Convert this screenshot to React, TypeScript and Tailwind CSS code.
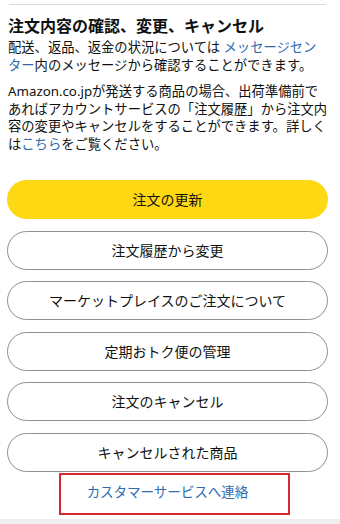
const buttons = [
  '注文履歴から変更',
  'マーケットプレイスのご注文について',
  '定期おトク便の管理',
  '注文のキャンセル',
  'キャンセルされた商品',
];

export default function App() {
  return (
    <div className="min-h-[524px] bg-white font-['Noto_Sans','Noto_Sans_CJK_JP',sans-serif] text-[#0f1111]">
      {/* Header + description */}
      <div className="pl-[8px] pt-[4px] w-[326px]">
        <div className="ml-[1px] h-px bg-[#dcdcdc]" />
        <h2 className="mt-[10px] text-[16px] leading-[22px] font-bold whitespace-nowrap">
          注文内容の確認、変更、キャンセル
        </h2>
        <p className="mt-[2px] text-[13.3px] leading-[17.7px] whitespace-nowrap">
          配送、返品、返金の状況については <a className="text-[#2e6bb0]">メッセージセン</a>
          <br />
          <a className="text-[#2e6bb0]">ター</a>内のメッセージから確認することができます。
        </p>
        <p className="mt-[8.6px] text-[13.3px] leading-[17.7px] whitespace-nowrap">
          Amazon.co.jpが発送する商品の場合、出荷準備前で
          <br />
          あればアカウントサービスの「注文履歴」から注文内
          <br />
          容の変更やキャンセルをすることができます。詳しく
          <br />
          は<a className="text-[#2e6bb0]">こちら</a>をご覧ください。
        </p>
      </div>

      {/* Actions */}
      <div className="mt-[26.2px] pl-[7px] w-[328px] flex flex-col gap-[11.6px]">
        <button className="h-[39px] w-full rounded-full bg-[#ffd814] text-[14px] text-[#0f1111]">
          注文の更新
        </button>
        {buttons.map((label) => (
          <button
            key={label}
            className="h-[39px] w-full rounded-full border border-[#8d9096] bg-white text-[14px] text-[#0f1111]"
          >
            {label}
          </button>
        ))}
      </div>

      {/* Contact link, highlighted */}
      <div className="relative mt-[1px] ml-[7px] w-[321px] h-[42px] flex items-center justify-center pb-[4px]">
        <a className="text-[13.5px] text-[#2e6bb0]">カスタマーサービスへ連絡</a>
        <div className="absolute left-[52px] top-0 w-[231px] h-[42px] border-2 border-[#d42a35]" />
      </div>

      <div className="mt-[4px] h-[20px] bg-[#eeeeee]" />
    </div>
  );
}
